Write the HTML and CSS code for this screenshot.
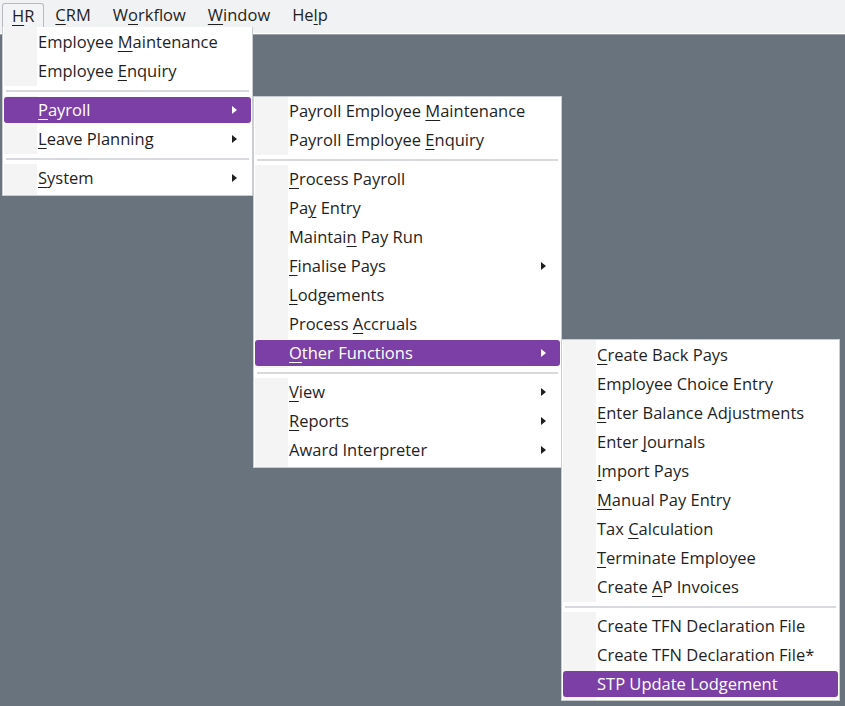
FILE: index.html
```html
<!DOCTYPE html>
<html>
<head>
<meta charset="utf-8">
<link rel="stylesheet" href="styles.css">
</head>
<body>
<div class="menubar">
  <span class="top active"><u>H</u>R</span>
  <span class="top"><u>C</u>RM</span>
  <span class="top">W<u>o</u>rkflow</span>
  <span class="top"><u>W</u>indow</span>
  <span class="top">He<u>l</u>p</span>
</div>

<div class="menu menu-hr">
  <div class="item"><span class="label">Employee <u>M</u>aintenance</span></div>
  <div class="item"><span class="label">Employee <u>E</u>nquiry</span></div>
  <div class="sep"></div>
  <div class="item sel"><span class="label"><u>P</u>ayroll</span><span class="arrow"></span></div>
  <div class="item"><span class="label"><u>L</u>eave Planning</span><span class="arrow"></span></div>
  <div class="sep"></div>
  <div class="item"><span class="label"><u>S</u>ystem</span><span class="arrow"></span></div>
</div>

<div class="menu menu-payroll">
  <div class="item"><span class="label">Payroll Employee <u>M</u>aintenance</span></div>
  <div class="item"><span class="label">Payroll Employee <u>E</u>nquiry</span></div>
  <div class="sep"></div>
  <div class="item"><span class="label"><u>P</u>rocess Payroll</span></div>
  <div class="item"><span class="label">Pa<u>y</u> Entry</span></div>
  <div class="item"><span class="label">Maintai<u>n</u> Pay Run</span></div>
  <div class="item"><span class="label"><u>F</u>inalise Pays</span><span class="arrow"></span></div>
  <div class="item"><span class="label"><u>L</u>odgements</span></div>
  <div class="item"><span class="label">Process <u>A</u>ccruals</span></div>
  <div class="item sel"><span class="label"><u>O</u>ther Functions</span><span class="arrow"></span></div>
  <div class="sep"></div>
  <div class="item"><span class="label"><u>V</u>iew</span><span class="arrow"></span></div>
  <div class="item"><span class="label"><u>R</u>eports</span><span class="arrow"></span></div>
  <div class="item"><span class="label">Award Interpreter</span><span class="arrow"></span></div>
</div>

<div class="menu menu-other">
  <div class="item"><span class="label"><u>C</u>reate Back Pays</span></div>
  <div class="item"><span class="label">Employee Choice Entry</span></div>
  <div class="item"><span class="label"><u>E</u>nter Balance Adjustments</span></div>
  <div class="item"><span class="label">Enter <u>J</u>ournals</span></div>
  <div class="item"><span class="label"><u>I</u>mport Pays</span></div>
  <div class="item"><span class="label"><u>M</u>anual Pay Entry</span></div>
  <div class="item"><span class="label">Tax <u>C</u>alculation</span></div>
  <div class="item"><span class="label"><u>T</u>erminate Employee</span></div>
  <div class="item"><span class="label">Create <u>A</u>P Invoices</span></div>
  <div class="sep"></div>
  <div class="item"><span class="label">Create TFN Declaration File</span></div>
  <div class="item"><span class="label">Create TFN Declaration File*</span></div>
  <div class="item sel"><span class="label">STP Update Lodgement</span></div>
</div>
</body>
</html>
```

FILE: styles.css
```css
html, body {
  margin: 0;
  padding: 0;
  height: 100%;
  background: #68737e;
  font-family: "Open Sans", "Noto Sans", "DejaVu Sans", sans-serif;
  color: #1f1f1f;
}

body {
  position: relative;
  overflow: hidden;
}

u {
  text-decoration-thickness: 1px;
  text-underline-offset: 3px;
}

.menubar {
  position: relative;
  z-index: 1;
  display: flex;
  align-items: flex-start;
  height: 33px;
  padding-left: 2px;
  background: #f1f2f4;
  border-bottom: 1px solid #ffffff;
  box-shadow: 0 1px 0 #9ca1a7;
  font-size: 16.5px;
}

.top {
  margin-top: 3px;
  height: 24px;
  line-height: 24px;
  padding: 0 11px;
  white-space: nowrap;
}

.top.active {
  padding: 0 9px 0 9px;
  height: 30px;
  border: 1px solid #b7bbc0;
  border-bottom: none;
  border-radius: 3px 3px 0 0;
  background: #f3f4f6;
}

.menu {
  position: absolute;
  z-index: 2;
  display: flex;
  flex-direction: column;
  box-sizing: border-box;
  padding: 0 0 2px;
  background: linear-gradient(to right, #ffffff 1px, #f4f4f5 1px, #f4f4f5 34px, #ffffff 34px);
  border: 1px solid #c9ccd0;
  font-size: 16.5px;
}

.menu-hr {
  left: 2px;
  top: 27px;
  width: 251px;
  border-top: none;
  padding-top: 1px;
}

.menu-payroll {
  left: 253px;
  top: 96px;
  width: 309px;
  z-index: 3;
}

.menu-other {
  left: 561px;
  top: 339px;
  width: 279px;
  z-index: 4;
  padding-top: 1px;
}

.menu-other .item:last-child {
  margin-bottom: 1px;
}

.item {
  display: flex;
  align-items: center;
  height: 26px;
  margin: 1px 1px 2px;
  padding-left: 34px;
  border-radius: 3px;
  white-space: nowrap;
  line-height: 26px;
}

.item.sel {
  background: #7b3fa5;
  color: #ffffff;
}

.label {
  white-space: pre;
}

.arrow {
  margin-left: auto;
  margin-right: 14px;
  width: 0;
  height: 0;
  border-left: 5px solid #1f1f1f;
  border-top: 4.5px solid transparent;
  border-bottom: 4.5px solid transparent;
}

.item.sel .arrow {
  border-left-color: #ffffff;
}

.sep {
  display: flex;
  align-items: center;
  height: 10px;
  padding: 0 3px;
  background: #ffffff;
}

.sep::before {
  content: "";
  flex: 1;
  height: 2px;
  background: #d6d9dd;
}
```
